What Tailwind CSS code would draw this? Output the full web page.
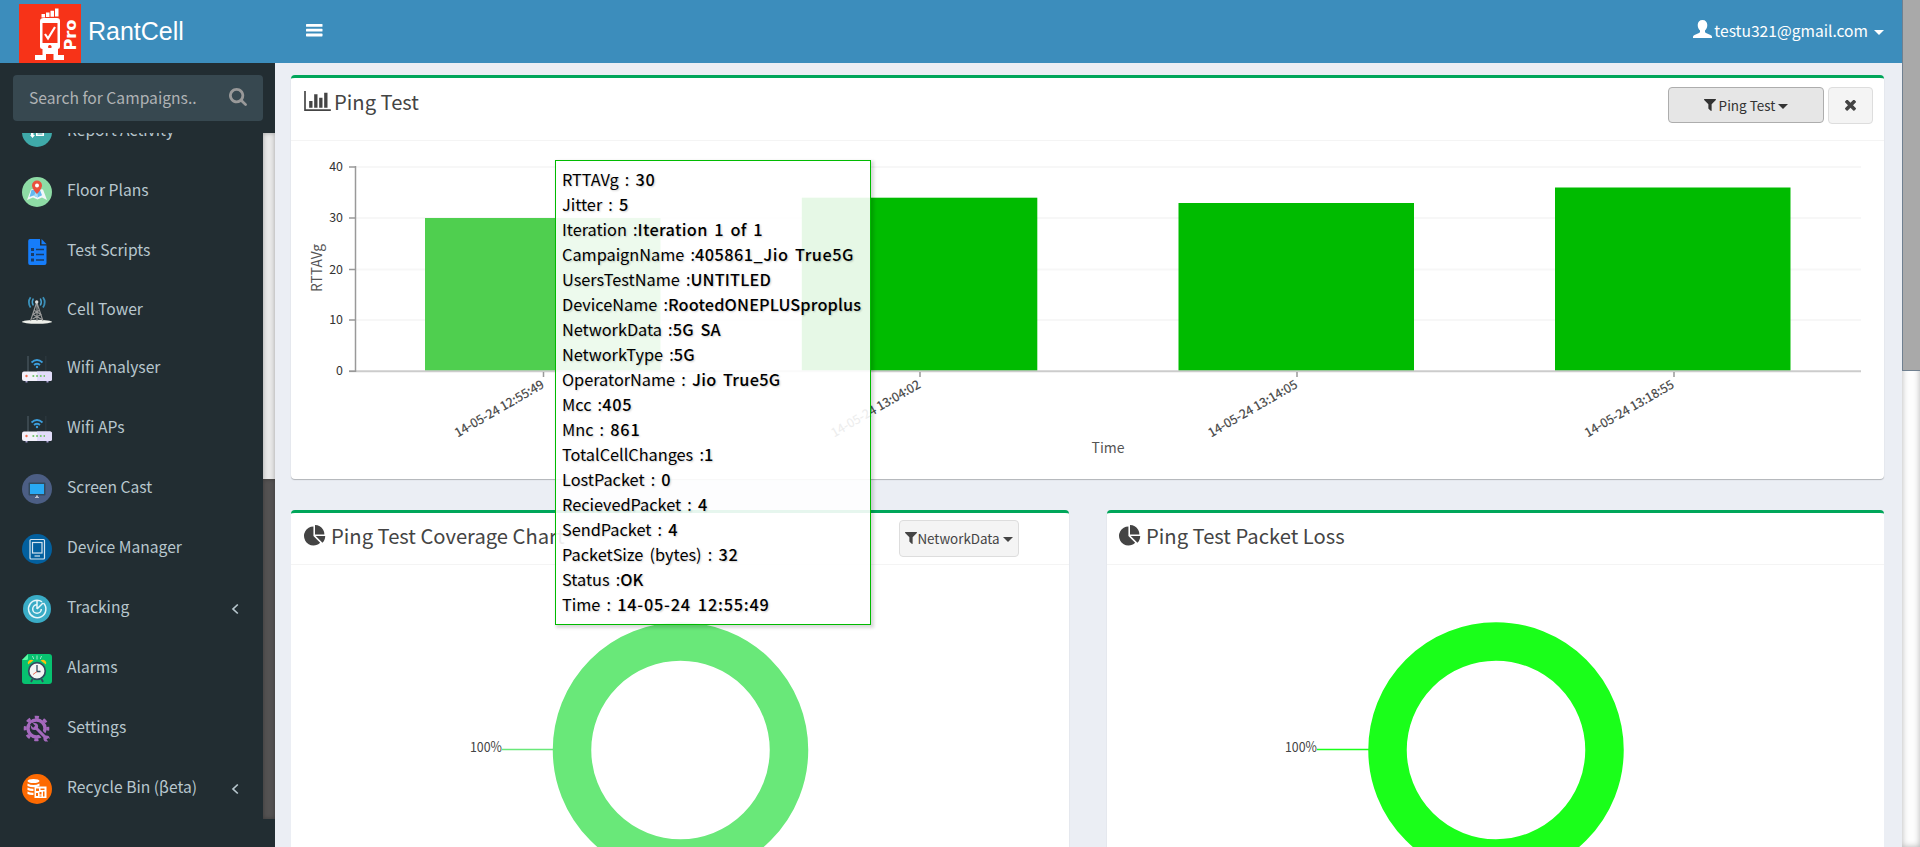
<!DOCTYPE html>
<html lang="en">
<head>
<meta charset="utf-8">
<title>RantCell</title>
<script src="https://cdn.jsdelivr.net/npm/@tailwindcss/browser@4"></script>
</head>
<body class="relative flex h-[847px] w-[1920px] overflow-hidden bg-[#ebeef4] font-['Noto_Sans_CJK_SC',sans-serif] text-[#444]">

<!-- Sidebar column -->
<aside class="flex w-[275px] shrink-0 flex-col bg-[#222d32]">
  <div class="flex h-[63px] shrink-0 items-end bg-[#3c8dbc] pl-[19px]">
    <svg class="h-[59px] w-[62px]" viewBox="0 0 62 59">
      <rect width="62" height="59" fill="#f73318"/>
      <g fill="#fff">
        <path d="M22.500 10h3.500v3.500h-3.500zM27 8.500h3.500v4.500H27zM31.500 6.800H35v6h-3.500zM36 4.500h3.500v8H36z"/>
        <path fill-rule="evenodd" d="M24.500 14h13.500q3 0 3 3v26q0 2-2.500 2h-15q-2.500 0-2.500-2V17q0-3 3.500-3zM23.500 19v20h15V19zM30.800 41a1.800 1.800 0 1 0 .1 0z"/>
        <path d="M23.500 44h15.500v7h6v5H34.500v-6h-7.500v6H16v-5h7.500z"/>
      </g>
      <path d="M26 30l3 4.500 7-11.500" fill="none" stroke="#fff" stroke-width="2.200"/>
      <text transform="translate(57 46.500) rotate(-90)" font-family="DejaVu Sans" font-weight="700" font-size="15.500" textLength="31" lengthAdjust="spacingAndGlyphs" fill="#fff">Pro</text>
    </svg>
    <span class="ml-[7px] h-[59px] pt-[11px] font-['Liberation_Sans',sans-serif] text-[25px] leading-[33px] text-white">RantCell</span>
  </div>
  <div class="mx-[12px] ml-[13px] mt-[12px] flex h-[46px] shrink-0 items-center justify-between rounded-[4px] bg-[#374850] pl-[16px] pr-[16px] text-[15.65px] leading-[24px] text-[#b0b3b5]">
    <span>Search for Campaigns..</span>
    <svg class="mb-[2px] h-[18px] w-[18px]" viewBox="64 128 1664 1664" fill="#999"><path d="M1216 832q0-185-131.500-316.500t-316.500-131.500-316.500 131.500-131.500 316.500 131.500 316.500 316.500 131.500 316.500-131.500 131.500-316.500zm512 832q0 52-38 90t-90 38q-54 0-90-38l-343-342q-179 124-399 124-143 0-273.500-55.500t-225-150-150-225-55.500-273.500 55.500-273.500 150-225 225-150 273.500-55.500 273.500 55.500 225 150 150 225 55.500 273.500q0 220-124 399l343 343q37 37 37 90z"/></svg>
  </div>
  <div class="mt-[12px] flex h-[686px] shrink-0 overflow-hidden">
    <nav class="-mt-[31px] w-[263px] text-[15.65px] leading-[24px] text-[#b8c7ce]">
      <a class="flex h-[60px] items-center pl-[22px]">
        <svg class="h-[30px] w-[30px]" viewBox="0 0 30 30"><circle cx="15" cy="15" r="15" fill="#3fa9a9"/><path d="M9 12h2.500v6H13l-2.500 3L8 18h1zM14 12h8v7h-8z" fill="#fff"/><path d="M15.500 14.500h5M15.500 17h5" stroke="#3fa9a9"/></svg>
        <span class="ml-[15px] pb-[5px]">Report Activity</span></a>
      <a class="flex h-[60px] items-center pl-[22px]">
        <svg class="h-[30px] w-[30px]" viewBox="0 0 30 30"><circle cx="15" cy="15" r="15" fill="#8edba5"/><path d="M9 12.500L5 23l6-2.500 4.500 2 4.500-2 5 2.500-4-10.500-4-.5h-4z" fill="#f1f6f8"/><path d="M9.500 13L7.500 20l4-1.500 4 2 4.500-2.200L18 13z" fill="#63b8ee"/><path d="M15 12l-3 6.800 4 1.700z" fill="#a8dbf5"/><path d="M15 3.500a5 5 0 0 1 5 5c0 3.500-5 8.500-5 8.500s-5-5-5-8.500a5 5 0 0 1 5-5z" fill="#ea4f3d"/><circle cx="15" cy="8.500" r="2" fill="#fff"/></svg>
        <span class="ml-[15px] pb-[5px]">Floor Plans</span></a>
      <a class="flex h-[60px] items-center pl-[22px]">
        <svg class="h-[30px] w-[30px]" viewBox="0 0 30 30"><path d="M8 2h10v6.500h6.500V26q0 2-2 2H8q-1.800 0-1.800-2V4Q6.200 2 8 2z" fill="#167dfa"/><path d="M19.500 2l5.200 5.200h-5.200z" fill="#167dfa"/><path d="M9 11h3v3H9zM9 16h3v3H9zM9 21.500h3v3H9z" fill="#1a3c66"/><path d="M14 12.500h8M14 17.500h8M14 23h8" stroke="#1a3c66" stroke-width="1.400"/></svg>
        <span class="ml-[15px] pb-[5px]">Test Scripts</span></a>
      <a class="flex h-[58px] items-center pl-[22px]">
        <svg class="mb-[2px] h-[30px] w-[30px]" viewBox="0 0 30 30"><ellipse cx="15" cy="26.800" rx="15" ry="2" fill="#eef0ea"/><path d="M14.500 8L8.500 26M15 8l6 18M12.500 15.500l6.500 4-8.500 4.500M17 15.500l-6 4 9 5M15 8v18" stroke="#9b9b9b" fill="none" stroke-width="1.100"/><circle cx="14.700" cy="7" r="1.700" fill="#ddd"/><path d="M11.300 3.500q-2 3.500 0 7M18.300 3.500q2 3.500 0 7" stroke="#4aa3d0" fill="none" stroke-width="1.500"/><path d="M8.600 2.200q-3.500 5 0 10.200M21 2.200q3.500 5 0 10.200" stroke="#3b8fb8" fill="none" stroke-width="1.800"/></svg>
        <span class="ml-[15px] pb-[5px]">Cell Tower</span></a>
      <a class="flex h-[60px] items-center pl-[22px]">
        <svg class="mb-[1px] h-[30px] w-[30px]" viewBox="0 0 30 30"><path d="M5 1h2v16H5z" fill="#3a474e"/><path d="M23 1h1.500v16H23z" fill="#2a363c"/><path d="M3.500 25.500h2v2h-2zM24.500 25.500h2v2h-2z" fill="#a79fd0"/><rect y="16.500" width="30" height="9.500" rx="2" fill="#f3f1fb"/><path d="M15 16.500h13q2 0 2 2V24q0 2-2 2H15z" fill="#e2dcfa"/><circle cx="4.500" cy="21" r="1.200" fill="#f0704f"/><path d="M10.500 21h12.500" stroke="#7cc576" stroke-width="2" stroke-dasharray="1.700 2"/><path d="M9.500 7.500q5.500-5 11 0M12 10q3-2.500 6 0" stroke="#3b9ddb" fill="none" stroke-width="1.800"/><circle cx="15" cy="12" r="1.200" fill="#3b9ddb"/></svg>
        <span class="ml-[15px] pb-[7px]">Wifi Analyser</span></a>
      <a class="flex h-[60px] items-center pl-[22px]">
        <svg class="mb-[1px] h-[30px] w-[30px]" viewBox="0 0 30 30"><path d="M5 1h2v16H5z" fill="#3a474e"/><path d="M23 1h1.500v16H23z" fill="#2a363c"/><path d="M3.500 25.500h2v2h-2zM24.500 25.500h2v2h-2z" fill="#a79fd0"/><rect y="16.500" width="30" height="9.500" rx="2" fill="#f3f1fb"/><path d="M15 16.500h13q2 0 2 2V24q0 2-2 2H15z" fill="#e2dcfa"/><circle cx="4.500" cy="21" r="1.200" fill="#f0704f"/><path d="M10.500 21h12.500" stroke="#7cc576" stroke-width="2" stroke-dasharray="1.700 2"/><path d="M9.500 7.500q5.500-5 11 0M12 10q3-2.500 6 0" stroke="#3b9ddb" fill="none" stroke-width="1.800"/><circle cx="15" cy="12" r="1.200" fill="#3b9ddb"/></svg>
        <span class="ml-[15px] pb-[7px]">Wifi APs</span></a>
      <a class="flex h-[60px] items-center pl-[22px]">
        <svg class="mb-[2px] h-[30px] w-[30px]" viewBox="0 0 30 30"><circle cx="15" cy="15" r="15" fill="#4c5e84"/><rect x="6.500" y="8.500" width="17" height="13" rx="1" fill="#324a5e"/><rect x="8" y="10" width="14" height="10" fill="#29a9f3"/><path d="M14 21.500h2v1.500h1v1h-4v-1h1z" fill="#b9c0cc"/></svg>
        <span class="ml-[15px] pb-[7px]">Screen Cast</span></a>
      <a class="flex h-[60px] items-center pl-[22px]">
        <svg class="mb-[2px] h-[30px] w-[30px]" viewBox="0 0 30 30"><circle cx="15" cy="15" r="15" fill="#03609f"/><g fill="none" stroke="#d5e5f0" stroke-width="1.200"><rect x="8" y="5.500" width="14.500" height="19.500" rx="1"/><rect x="10.500" y="8.500" width="9.500" height="10.500"/><path d="M12.500 22h5.500"/></g></svg>
        <span class="ml-[15px] pb-[7px]">Device Manager</span></a>
      <a class="flex h-[60px] items-center pl-[22px] pr-[24px]">
        <svg class="mb-[2px] h-[30px] w-[30px]" viewBox="0 0 30 30"><circle cx="15" cy="15" r="14" fill="#3aacc6"/><g fill="none" stroke="#e8f7fa" stroke-width="1.500"><path d="M15 15V6.500M15 15l6-6M21.500 9A8.700 8.700 0 1 1 15 6.300q3 0 5 1.500"/><path d="M15 10.700a4.300 4.300 0 1 0 4.300 4.300"/></g></svg>
        <span class="ml-[15px] grow pb-[7px]">Tracking</span>
        <svg class="mb-[2px] h-[12px] w-[8px]" viewBox="0 0 8 12"><path d="M6.800 1.500L2 6l4.800 4.500" fill="none" stroke="#b8c7ce" stroke-width="1.700"/></svg></a>
      <a class="flex h-[60px] items-center pl-[22px]">
        <svg class="mb-[2px] h-[30px] w-[30px]" viewBox="0 0 30 30"><path d="M6 0h21q3 0 3 3v24q0 3-3 3H3q-3 0-3-3V6z" fill="#07c270"/><path d="M0 6l6-6v4.500Q6 6 4.500 6z" fill="#5bfba5"/><path d="M10.500 25l-1.500 3M19.500 25l1.500 3" stroke="#324a5e" stroke-width="1.800"/><path d="M6 10.500q-1-2.500 1-4t4.500 0zM24 10.500q1-2.500-1-4t-4.500 0z" fill="#ffc10d"/><circle cx="15" cy="17" r="8.300" fill="#f4f4f4" stroke="#324a5e" stroke-width="1.700"/><path d="M15 11v6.500h3.500" stroke="#324a5e" stroke-width="1.300" fill="none"/><path d="M15 17.500l-4 3" stroke="#ee6b5b"/><path d="M15 1.500v4M10.500 2l1.200 3M19.500 2l-1.200 3" stroke="#9fe9c6"/></svg>
        <span class="ml-[15px] pb-[7px]">Alarms</span></a>
      <a class="flex h-[60px] items-center pl-[22px]">
        <svg class="mb-[2px] h-[30px] w-[30px]" viewBox="0 0 30 30"><circle cx="14.500" cy="14.500" r="8.500" fill="none" stroke="#a569bd" stroke-width="3.400"/><circle cx="14.500" cy="14.500" r="11.300" fill="none" stroke="#a569bd" stroke-width="3" stroke-dasharray="4.200 4.675" stroke-dashoffset="2.100"/><path d="M16 16l10 10" stroke="#222d32" stroke-width="5.500"/><path d="M12.500 12.500L24 24" stroke="#a569bd" stroke-width="3"/><circle cx="12.500" cy="12.500" r="3.600" fill="#a569bd"/><path d="M8 10.500l2-2 3.200 3.200-2 2z" fill="#222d32"/><circle cx="24.500" cy="24.500" r="3.100" fill="#a569bd"/><path d="M24.500 25.500l2-1.500 3 3-2 2z" fill="#222d32"/></svg>
        <span class="ml-[15px] pb-[7px]">Settings</span></a>
      <a class="flex h-[60px] items-center pl-[22px] pr-[24px]">
        <svg class="mb-[2px] h-[30px] w-[30px]" viewBox="0 0 30 30"><circle cx="15" cy="15" r="15" fill="#fd6a02"/><ellipse cx="11.500" cy="7" rx="6" ry="2" fill="#fff"/><path d="M5.500 9.500q6 3 12 0V12q-6 2.500-12 0zM5.500 13.500q3 1.500 6 1.300V17q-3 .3-6-1zM5.500 17.500q3 1.500 6 1.300V21q-3 .3-6-1z" fill="#fff"/><path fill-rule="evenodd" d="M12.500 12.500H24.500V24H12.500zM14 14.500v2.500h3v-2.500zM18.500 14.500v1.500h4v-1.500zM14 19v3h2v-3zM17.500 18v2.500h2V18zM21 17.500v5h1.500v-5zM17.500 21.500v1h2v-1z" fill="#fff"/></svg>
        <span class="ml-[15px] grow pb-[7px]">Recycle Bin (βeta)</span>
        <svg class="mb-[2px] h-[12px] w-[8px]" viewBox="0 0 8 12"><path d="M6.800 1.500L2 6l4.800 4.500" fill="none" stroke="#b8c7ce" stroke-width="1.700"/></svg></a>
    </nav>
    <div class="flex w-[12px] flex-col bg-[#e9e9e9] shadow-[inset_0_0_5px_rgba(0,0,0,0.3)]">
      <div class="mt-[346px] grow bg-[#545252] shadow-[inset_0_0_4px_rgba(0,0,0,0.3)]"></div>
    </div>
  </div>
</aside>

<!-- Main column -->
<main class="flex h-[847px] w-[1627px] shrink-0 flex-col overflow-hidden">
  <header class="flex h-[63px] shrink-0 items-center justify-between bg-[#3c8dbc] pl-[31px] pr-[18px] text-white">
    <svg class="mb-[3px] h-[14px] w-[17px]" viewBox="0 0 17 14" fill="#fff"><rect y="1" width="16.500" height="2.800" rx=".6"/><rect y="5.800" width="16.500" height="2.800" rx=".6"/><rect y="10.600" width="16.500" height="2.800" rx=".6"/></svg>
    <div class="mb-[3px] flex items-center text-[15.6px] leading-[24px]">
      <svg class="mb-[3px] mr-[2px] h-[18px] w-[19px]" viewBox="0 0 19 18" fill="#fff"><path d="M9.500 0c3 0 4.800 2 4.800 5 0 2.500-1 4.500-2.300 5.600v1.200c0 .5.300.8 1 1.100l4.500 2c1 .5 1.500 1.100 1.500 2.100v1H0v-1c0-1 .5-1.600 1.500-2.100l4.500-2c.7-.3 1-.6 1-1.100v-1.200C5.700 9.500 4.700 7.500 4.700 5c0-3 1.800-5 4.800-5z"/></svg>
      <span>testu321@gmail.com</span>
      <svg class="ml-[6px] mt-[4px] h-[5px] w-[10px]" viewBox="0 0 10 5"><path d="M0 0h10L5 5z" fill="#fff"/></svg>
    </div>
  </header>

  <div class="flex flex-col gap-[31px] pl-[16px] pr-[18px] pt-[12px]">
    <section class="h-[404px] shrink-0 overflow-hidden rounded-[4px] border-t-[3px] border-[#00a65a] bg-white shadow-[0_1px_1px_rgba(0,0,0,0.25)]">
      <div class="flex h-[63px] justify-between border-b border-[#f4f4f4] pl-[13px] pr-[11px]">
        <div class="flex h-[48px] items-center">
          <svg class="mb-[2px] h-[20px] w-[27px]" viewBox="0 128 2048 1536" fill="#444"><path d="M640 896v512h-256v-512h256zm384-512v1024h-256v-1024h256zm1024 1152v128h-2048v-1536h128v1408h1920zm-640-896v768h-256v-768h256zm384-384v1152h-256v-1152h256z"/></svg>
          <h3 class="ml-[3px] text-[20.2px] leading-[30px]">Ping Test</h3>
        </div>
        <div class="flex items-start gap-[4px] pt-[9px]">
          <button class="flex h-[36px] w-[156px] items-center justify-center rounded-[4px] border border-[#adadad] bg-[#e6e6e6] text-[13.5px] leading-[20px] text-[#333]">
            <svg class="h-[12px] w-[12px]" viewBox="190 256 1412 1408" fill="#333"><path d="M1595 295q17 41-14 70l-493 493v742q0 42-39 59-13 5-25 5-27 0-45-19l-256-256q-19-19-19-45v-486l-493-493q-31-29-14-70 17-39 59-39h1280q42 0 59 39z"/></svg>
            <span class="ml-[3px] mr-[3px]">Ping Test</span>
            <svg class="mt-[2px] h-[5px] w-[10px]" viewBox="0 0 10 5"><path d="M0 0h10L5 5z" fill="#333"/></svg>
          </button>
          <button class="flex h-[37px] w-[45px] items-center justify-center rounded-[4px] border border-[#ddd] bg-[#f4f4f4]">
            <svg class="h-[11px] w-[11px]" viewBox="302 386 1188 1188" fill="#444"><path d="M1490 1322q0 40-28 68l-136 136q-28 28-68 28t-68-28l-294-294-294 294q-28 28-68 28t-68-28l-136-136q-28-28-28-68t28-68l294-294-294-294q-28-28-28-68t28-68l136-136q28-28 68-28t68 28l294 294 294-294q28-28 68-28t68 28l136 136q28 28 28 68t-28 68l-294 294 294 294q28 28 28 68z"/></svg>
          </button>
        </div>
      </div>
      <svg class="block h-[338px] w-[1593px]" viewBox="291 141 1593 338">
        <path d="M356 167H1861M356 218H1861M356 269.500H1861M356 320H1861" stroke="#f7f7f7" stroke-width="2"/>
        <g fill="#00bb00"><rect x="425" y="218" width="235.500" height="153" fill="#4fcf4f"/><rect x="801.800" y="197.700" width="235.500" height="173.300"/><rect x="1178.500" y="203" width="235.500" height="168"/><rect x="1555" y="187.500" width="235.500" height="183.500"/></g>
        <path d="M349 371.300H1861" stroke="#ccc" stroke-width="2"/>
        <path d="M355.500 166V372M349 167H356M349 218H356M349 269.500H356M349 320H356M349 371.300H356M543.500 372v5M920 372v5M1297 372v5M1674 372v5" stroke="#999" stroke-width="1.500" fill="none"/>
        <g font-size="12.400" fill="#333" text-anchor="end"><text x="343" y="171">40</text><text x="343" y="222.300">30</text><text x="343" y="273.500">20</text><text x="343" y="324">10</text><text x="343" y="375">0</text></g>
        <g font-size="12.400" fill="#444" stroke="#444" stroke-width=".2" text-anchor="end">
          <text transform="translate(545 387) rotate(-30)">14-05-24 12:55:49</text>
          <text transform="translate(921.500 387) rotate(-30)">14-05-24 13:04:02</text>
          <text transform="translate(1298.500 387) rotate(-30)">14-05-24 13:14:05</text>
          <text transform="translate(1675 387) rotate(-30)">14-05-24 13:18:55</text>
        </g>
        <text transform="translate(322 268) rotate(-90)" text-anchor="middle" font-size="13.800" fill="#555">RTTAVg</text>
        <text x="1108" y="453" text-anchor="middle" font-size="14" fill="#555">Time</text>
      </svg>
    </section>

    <div class="flex h-[337px] justify-between overflow-hidden">
      <section class="h-[337px] w-[778px] overflow-hidden rounded-t-[4px] border-t-[3px] border-[#00a65a] bg-white shadow-[0_1px_1px_rgba(0,0,0,0.25)]">
        <div class="flex h-[52px] justify-between border-b border-[#f4f4f4] pl-[13px] pr-[50px]">
          <div class="flex h-[48px] items-center">
            <svg class="mb-[3px] h-[22px] w-[22px]" viewBox="0 0 1792 1792" fill="#444"><path d="M768 890l546 546q-106 108-247.500 168t-298.500 60q-209 0-385.500-103t-279.500-279.500-103-385.500 103-385.500 279.500-279.500 385.500-103v762zm187 6h773q0 157-60 298.500t-168 247.500zm709-128h-768v-768q209 0 385.500 103t279.500 279.500 103 385.500z"/></svg>
            <h3 class="mb-[2px] ml-[5px] text-[20.2px] leading-[30px]">Ping Test Coverage Chart</h3>
          </div>
          <button class="mt-[7px] flex h-[37px] w-[120px] items-center justify-center rounded-[4px] border border-[#ddd] bg-[#f4f4f4] pb-[1px] text-[13.4px] leading-[20px] text-[#444]">
            <svg class="h-[12px] w-[12px]" viewBox="190 256 1412 1408" fill="#444"><path d="M1595 295q17 41-14 70l-493 493v742q0 42-39 59-13 5-25 5-27 0-45-19l-256-256q-19-19-19-45v-486l-493-493q-31-29-14-70 17-39 59-39h1280q42 0 59 39z"/></svg>
            <span class="mr-[3px]">NetworkData</span>
            <svg class="mt-[2px] h-[5px] w-[10px]" viewBox="0 0 10 5"><path d="M0 0h10L5 5z" fill="#444"/></svg>
          </button>
        </div>
        <svg class="block h-[282px] w-[778px]" viewBox="291 565 778 282">
          <circle cx="680.500" cy="750" r="108.500" fill="none" stroke="#69e879" stroke-width="38.500"/>
          <path d="M502 749.500h52" stroke="#69e879" stroke-width="1.500"/>
          <text x="470" y="752" font-size="13.800" textLength="32" lengthAdjust="spacingAndGlyphs" fill="#444">100%</text>
        </svg>
      </section>
      <section class="h-[337px] w-[777px] overflow-hidden rounded-t-[4px] border-t-[3px] border-[#00a65a] bg-white shadow-[0_1px_1px_rgba(0,0,0,0.25)]">
        <div class="flex h-[52px] border-b border-[#f4f4f4] pl-[12px]">
          <div class="flex h-[48px] items-center">
            <svg class="mb-[3px] h-[22px] w-[22px]" viewBox="0 0 1792 1792" fill="#444"><path d="M768 890l546 546q-106 108-247.500 168t-298.500 60q-209 0-385.500-103t-279.500-279.500-103-385.500 103-385.500 279.500-279.500 385.500-103v762zm187 6h773q0 157-60 298.500t-168 247.500zm709-128h-768v-768q209 0 385.500 103t279.500 279.500 103 385.500z"/></svg>
            <h3 class="mb-[2px] ml-[5px] text-[20.2px] leading-[30px]">Ping Test Packet Loss</h3>
          </div>
        </div>
        <svg class="block h-[282px] w-[777px]" viewBox="1107 565 777 282">
          <circle cx="1496" cy="750" r="108.500" fill="none" stroke="#1aff1a" stroke-width="38.500"/>
          <path d="M1317 749.500h52" stroke="#1aff1a" stroke-width="1.500"/>
          <text x="1285" y="752" font-size="13.800" textLength="32" lengthAdjust="spacingAndGlyphs" fill="#444">100%</text>
        </svg>
      </section>
    </div>
  </div>
</main>

<!-- Page scrollbar -->
<div class="w-[18px] shrink-0 bg-[#fdfdfd] shadow-[inset_0_0_6px_rgba(0,0,0,0.3)]">
  <div class="h-[371px] border border-t-0 border-r-0 border-[#708090] bg-[#a9a9a9]"></div>
</div>

<!-- Chart tooltip -->
<div class="absolute left-[555px] top-[160px] h-[465px] w-[316px] border border-[#00bb00] bg-white/90 pl-[6px] pt-[6px] text-[16.3px] leading-[25px] whitespace-nowrap text-black shadow-[2px_2px_3px_1px_rgba(0,0,0,0.15)] [word-spacing:2.5px] text-shadow-[1px_1px_2px_rgba(0,0,0,0.2)]">
  <div>RTTAVg : <span class="font-medium tracking-[0.8px]">30</span></div>
  <div>Jitter : <span class="font-medium tracking-[0.8px]">5</span></div>
  <div>Iteration :<span class="font-medium tracking-[0.35px]">Iteration 1 of 1</span></div>
  <div>CampaignName :<span class="font-medium tracking-[0.5px]">405861_Jio True5G</span></div>
  <div>UsersTestName :<span class="font-medium tracking-[0.2px]">UNTITLED</span></div>
  <div>DeviceName :<span class="font-medium tracking-[0.15px]">RootedONEPLUSproplus</span></div>
  <div>NetworkData :<span class="font-medium tracking-[0.3px]">5G SA</span></div>
  <div>NetworkType :<span class="font-medium tracking-[0.3px]">5G</span></div>
  <div>OperatorName : <span class="font-medium tracking-[0.3px]">Jio True5G</span></div>
  <div>Mcc :<span class="font-medium tracking-[0.8px]">405</span></div>
  <div>Mnc : <span class="font-medium tracking-[0.8px]">861</span></div>
  <div>TotalCellChanges :<span class="font-medium">1</span></div>
  <div>LostPacket : <span class="font-medium tracking-[0.8px]">0</span></div>
  <div>RecievedPacket : <span class="font-medium tracking-[0.8px]">4</span></div>
  <div>SendPacket : <span class="font-medium tracking-[0.8px]">4</span></div>
  <div>PacketSize (bytes) : <span class="font-medium tracking-[0.8px]">32</span></div>
  <div>Status :<span class="font-medium">OK</span></div>
  <div>Time : <span class="font-medium tracking-[0.8px]">14-05-24 12:55:49</span></div>
</div>
</body>
</html>
